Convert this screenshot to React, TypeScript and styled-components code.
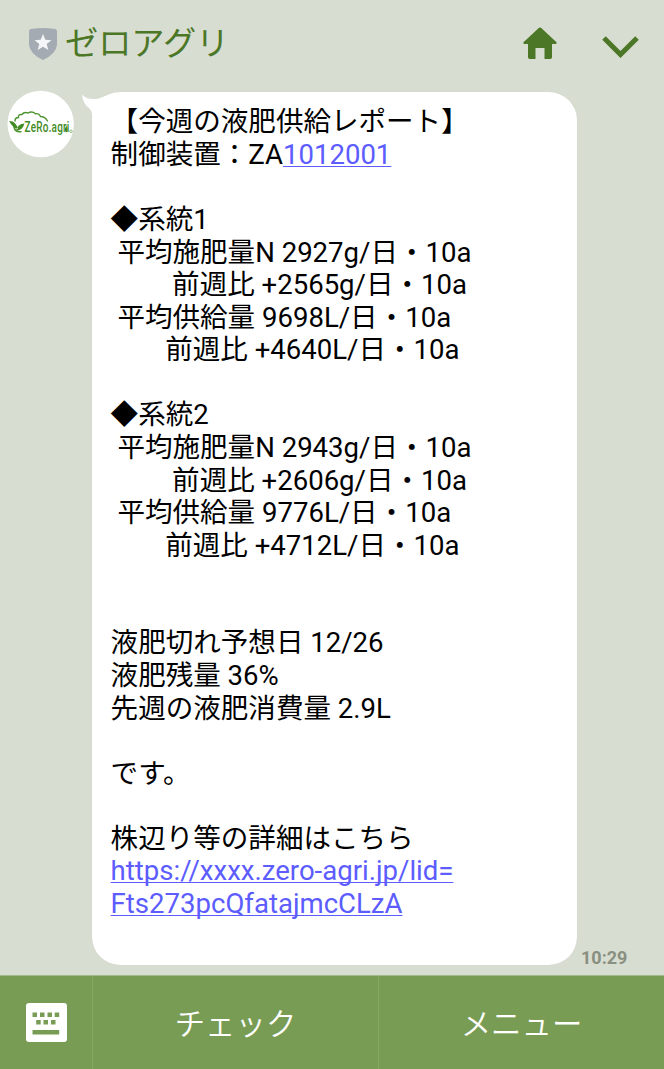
import React from "react";
import styled, { createGlobalStyle } from "styled-components";

const GlobalStyle = createGlobalStyle`
  body { margin: 0; background: #d8ddd2; }
`;

const Screen = styled.div`
  width: 664px;
  height: 1069px;
  display: flex;
  flex-direction: column;
  overflow: hidden;
  background: #d8ddd2;
  font-family: Roboto, "Noto Sans CJK JP", sans-serif;
`;

const Header = styled.header`
  height: 88px;
  flex: none;
  display: flex;
  align-items: center;
  box-sizing: border-box;
  padding: 0 25.5px 0 29px;
  color: #4b7726;
`;

const Title = styled.h1`
  flex: 1;
  margin: 0 0 1px 8px;
  font-size: 33.2px;
  line-height: 40px;
  font-weight: 400;
`;

const HomeIcon = styled.svg`
  margin: 0 45px 2px 0;
`;

const ChevronIcon = styled.svg`
  margin-top: 5px;
`;

const Chat = styled.main`
  height: 887px;
  flex: none;
  display: flex;
  align-items: flex-start;
  box-sizing: border-box;
  padding: 4px 0 0 7px;
`;

const Avatar = styled.svg`
  flex: none;
  margin: -1px 18px 0 0;
  overflow: visible;
`;

const Bubble = styled.article`
  position: relative;
  flex: none;
  box-sizing: border-box;
  width: 485px;
  height: 873px;
  padding: 14.2px 18.6px 0;
  border-radius: 28px;
  background: #fff;
  box-shadow: 0 0 1px #c5cabf;
`;

const Tail = styled.svg`
  position: absolute;
  left: -11px;
  top: 1px;
`;

const Line = styled.div`
  height: 32.58px;
  line-height: 32.58px;
  font-size: 27.56px;
  white-space: pre;
  color: #000;
`;

const Link = styled.a`
  color: #5c5cff;
  text-decoration: underline;
  text-decoration-thickness: 1.4px;
  text-underline-offset: 2.4px;
  text-decoration-skip-ink: none;
`;

const Time = styled.time`
  align-self: flex-end;
  margin: 0 0 6px 4px;
  font-size: 18px;
  line-height: 22px;
  font-weight: 700;
  color: #899080;
`;

const Footer = styled.nav`
  height: 94px;
  flex: none;
  display: grid;
  grid-template-columns: 92px 286px 286px;
  box-sizing: border-box;
  border-top: 1px solid #a3b98b;
  background: #799c54;
`;

const MenuItem = styled.div<{ $divided?: boolean }>`
  display: flex;
  align-items: center;
  justify-content: center;
  box-sizing: border-box;
  border-left: ${(p) => (p.$divided ? "1px solid #88a767" : "0")};
  padding-bottom: 1px;
  font-size: 30.4px;
  font-weight: 350;
  color: #fff;
`;

const report: React.ReactNode[] = [
  "【今週の液肥供給レポート】",
  <>制御装置：ZA<Link>1012001</Link></>,
  "",
  "◆系統1",
  " 平均施肥量N 2927g/日・10a",
  "         前週比 +2565g/日・10a",
  " 平均供給量 9698L/日・10a",
  "        前週比 +4640L/日・10a",
  "",
  "◆系統2",
  " 平均施肥量N 2943g/日・10a",
  "         前週比 +2606g/日・10a",
  " 平均供給量 9776L/日・10a",
  "        前週比 +4712L/日・10a",
  "",
  "",
  "液肥切れ予想日 12/26",
  "液肥残量 36%",
  "先週の液肥消費量 2.9L",
  "",
  "です。",
  "",
  "株辺り等の詳細はこちら",
  <Link>https://xxxx.zero-agri.jp/lid=</Link>,
  <Link>Fts273pcQfatajmcCLzA</Link>,
];

export default function App() {
  return (
    <Screen lang="ja">
      <GlobalStyle />
      <Header>
        <svg width="28" height="32" viewBox="0 0 28 32">
          <path d="M2 1Q14-1 26 1Q28 1 28 4V17Q27 26 14 32Q1 26 0 17V4Q0 1 2 1Z" fill="#a5abb3" />
          <path d="M14 6l2.3 5.8 6.2.4-4.8 3.9 1.6 6-5.3-3.4-5.3 3.4 1.6-6-4.8-3.9 6.2-.4Z" fill="#f4f6f7" />
        </svg>
        <Title>ゼロアグリ</Title>
        <HomeIcon width="34" height="32" viewBox="0 0 34 32">
          <path d="M16 .8Q17 0 18 .8L33.5 15.2Q34.4 16.8 32.5 17H29V30.2Q29 32 27.2 32H21.5V21H12.5V32H6.8Q5 32 5 30.2V17H1.5Q-.4 16.8.5 15.2Z" fill="#4b7726" />
        </HomeIcon>
        <ChevronIcon width="37" height="22" viewBox="0 0 37 22">
          <path d="M2 2L18.5 18.5L35 2" fill="none" stroke="#4b7726" strokeWidth="5" />
        </ChevronIcon>
      </Header>
      <Chat>
        <Avatar width="67" height="67" viewBox="7 91 67 67">
          <circle cx="40.7" cy="124" r="33.2" fill="#fff" />
          <g fill="none" stroke="#4d9430" strokeWidth="1.4" strokeLinecap="round">
            <path d="M15 121Q15 117.5 18.5 117.5Q18 114 22 114.5Q24 111.5 28 113Q32 110.8 35.5 113.7Q39 113 40.5 116.5Q45 116.5 47.5 121" />
            <path d="M14 127Q15 132.5 21 131.7" />
          </g>
          <path d="M9.2 121Q15.5 120.5 18 129Q12.5 128 9.2 121ZM24.500 123.500Q17.500 123.500 16 131Q22.500 130.500 24.500 123.500Z" fill="#438b24" />
          <text transform="translate(24.6 132.3) scale(.655 1)" fontFamily="Roboto" fontWeight="500" fontSize="15.2" letterSpacing=".35" fill="#438b24">ZeRo.agri</text>
          <path d="M66.300 125.500Q68.300 129 67.500 131.300Q66.300 133 65.100 131.300Q64.300 129 66.300 125.500Z" fill="#438b24" />
          <circle cx="71" cy="131.3" r="1.3" fill="none" stroke="#6aa550" strokeWidth=".7" />
        </Avatar>
        <Bubble>
          <Tail width="30" height="30" viewBox="0 0 30 30">
            <path d="M1 1.5Q6 7.5 18 5.5L29 1L25 22L11 28Q12 19 8.5 15.5Q2 11 1 1.5Z" fill="#fff" />
          </Tail>
          {report.map((text, i) => (
            <Line key={i}>{text}</Line>
          ))}
        </Bubble>
        <Time>10:29</Time>
      </Chat>
      <Footer>
        <MenuItem>
          <svg width="41" height="39" viewBox="0 0 41 39">
            <rect width="41" height="39" rx="3" fill="#fff" />
            <path d="M6.5 9.5h4.5v4.5h-4.5zM14 9.5h4.5v4.5h-4.5zM21.5 9.5h4.5v4.5h-4.5zM28.7 9.5h4.5v4.5h-4.5zM10.2 17h4.5v4.5h-4.5zM17.5 17h4.5v4.5h-4.5zM25 17h4.5v4.5h-4.5zM6.5 27h26.7v4.5h-26.7z" fill="#799c54" />
          </svg>
        </MenuItem>
        <MenuItem $divided>チェック</MenuItem>
        <MenuItem $divided>メニュー</MenuItem>
      </Footer>
    </Screen>
  );
}
